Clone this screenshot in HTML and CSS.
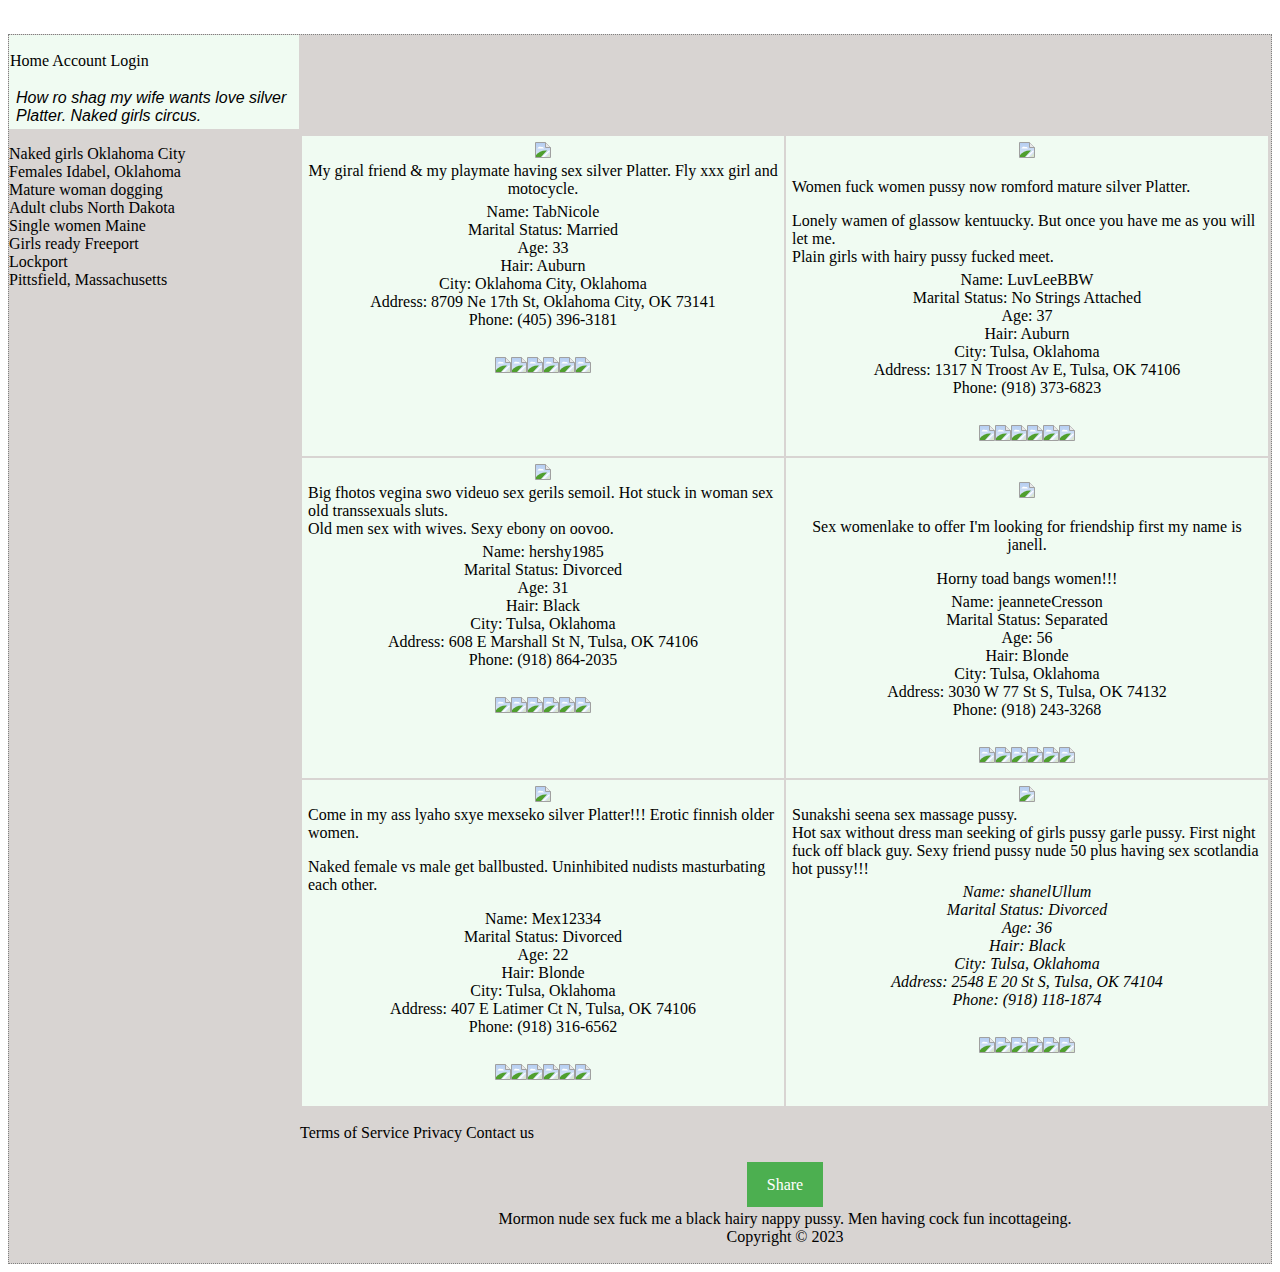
FILE: index.html
```html
<!DOCTYPE html>
<html>
<head>
<title>How ro shag my wife wants love silver Platter</title>
<link rel="stylesheet" href="styles.css">
</head>
<body>
<svg class="defs" width="0" height="0">
  <defs>
    <linearGradient id="sky" x1="0" y1="0" x2="0" y2="1">
      <stop offset="0" stop-color="#b4cdf2"/>
      <stop offset="1" stop-color="#e2ebf8"/>
    </linearGradient>
    <symbol id="broken" viewBox="0 0 16 16">
      <path d="M0.5 0.5H10.5L15.5 5.5V15.5H0.5Z" fill="url(#sky)" stroke="#a0a0a0"/>
      <path d="M10.5 0.5V5.5H15.5" fill="#e8e8e8" stroke="#a0a0a0"/>
      <path d="M2.5 6.5C3 4.8 5 4.2 6 5C7.5 4.6 8.8 5.4 9 6.5Z" fill="#fff"/>
      <path d="M1 15V13C3.5 10 7.5 8 12 8.5L6 15Z" fill="#4f9f2e"/>
      <path d="M7 15L14 8.5L15 9L9 15Z" fill="#fff"/>
      <path d="M11 15L15 11V15Z" fill="#d9e6d0"/>
    </symbol>
  </defs>
</svg>

<div id="container">
  <div id="left">
    <div id="header">
      <div>Home Account Login</div>
      <h1 class="tagline">How ro shag my wife wants love silver Platter. Naked girls circus.</h1>
    </div>
    <div id="nav">
      <div>Naked girls Oklahoma City</div>
      <div>Females Idabel, Oklahoma</div>
      <div>Mature woman dogging</div>
      <div>Adult clubs North Dakota</div>
      <div>Single women Maine</div>
      <div>Girls ready Freeport</div>
      <div>Lockport</div>
      <div>Pittsfield, Massachusetts</div>
    </div>
  </div>

  <div id="main">
    <div id="profiles">

      <div class="profile center">
        <div class="photo"><svg class="icon"><use href="#broken"/></svg></div>
        <div>My giral friend &amp; my playmate having sex silver Platter. Fly xxx girl and motocycle.</div>
        <div class="details">
          Name: TabNicole<br>Marital Status: Married<br>Age: 33<br>Hair: Auburn<br>City: Oklahoma City, Oklahoma<br>Address: 8709 Ne 17th St, Oklahoma City, OK 73141<br>Phone: (405) 396-3181
        </div>
        <div class="stars"><svg class="icon"><use href="#broken"/></svg><svg class="icon"><use href="#broken"/></svg><svg class="icon"><use href="#broken"/></svg><svg class="icon"><use href="#broken"/></svg><svg class="icon"><use href="#broken"/></svg><svg class="icon"><use href="#broken"/></svg></div>
      </div>

      <div class="profile">
        <div class="photo"><svg class="icon"><use href="#broken"/></svg></div>
        <p>Women fuck women pussy now romford mature silver Platter.</p>
        <div>Lonely wamen of glassow kentuucky. But once you have me as you will let me.<br>Plain girls with hairy pussy fucked meet.</div>
        <div class="details">
          Name: LuvLeeBBW<br>Marital Status: No Strings Attached<br>Age: 37<br>Hair: Auburn<br>City: Tulsa, Oklahoma<br>Address: 1317 N Troost Av E, Tulsa, OK 74106<br>Phone: (918) 373-6823
        </div>
        <div class="stars"><svg class="icon"><use href="#broken"/></svg><svg class="icon"><use href="#broken"/></svg><svg class="icon"><use href="#broken"/></svg><svg class="icon"><use href="#broken"/></svg><svg class="icon"><use href="#broken"/></svg><svg class="icon"><use href="#broken"/></svg></div>
      </div>

      <div class="profile">
        <div class="photo"><svg class="icon"><use href="#broken"/></svg></div>
        <div>Big fhotos vegina swo videuo sex gerils semoil. Hot stuck in woman sex old transsexuals sluts.<br>Old men sex with wives. Sexy ebony on oovoo.</div>
        <div class="details">
          Name: hershy1985<br>Marital Status: Divorced<br>Age: 31<br>Hair: Black<br>City: Tulsa, Oklahoma<br>Address: 608 E Marshall St N, Tulsa, OK 74106<br>Phone: (918) 864-2035
        </div>
        <div class="stars"><svg class="icon"><use href="#broken"/></svg><svg class="icon"><use href="#broken"/></svg><svg class="icon"><use href="#broken"/></svg><svg class="icon"><use href="#broken"/></svg><svg class="icon"><use href="#broken"/></svg><svg class="icon"><use href="#broken"/></svg></div>
      </div>

      <div class="profile center">
        <div class="photo low"><svg class="icon"><use href="#broken"/></svg></div>
        <p>Sex womenlake to offer I'm looking for friendship first my name is janell.</p>
        <div>Horny toad bangs women!!!</div>
        <div class="details">
          Name: jeanneteCresson<br>Marital Status: Separated<br>Age: 56<br>Hair: Blonde<br>City: Tulsa, Oklahoma<br>Address: 3030 W 77 St S, Tulsa, OK 74132<br>Phone: (918) 243-3268
        </div>
        <div class="stars"><svg class="icon"><use href="#broken"/></svg><svg class="icon"><use href="#broken"/></svg><svg class="icon"><use href="#broken"/></svg><svg class="icon"><use href="#broken"/></svg><svg class="icon"><use href="#broken"/></svg><svg class="icon"><use href="#broken"/></svg></div>
      </div>

      <div class="profile">
        <div class="photo"><svg class="icon"><use href="#broken"/></svg></div>
        <div>Come in my ass lyaho sxye mexseko silver Platter!!! Erotic finnish older women.</div>
        <p class="last">Naked female vs male get ballbusted. Uninhibited nudists masturbating each other.</p>
        <div class="details">
          Name: Mex12334<br>Marital Status: Divorced<br>Age: 22<br>Hair: Blonde<br>City: Tulsa, Oklahoma<br>Address: 407 E Latimer Ct N, Tulsa, OK 74106<br>Phone: (918) 316-6562
        </div>
        <div class="stars"><svg class="icon"><use href="#broken"/></svg><svg class="icon"><use href="#broken"/></svg><svg class="icon"><use href="#broken"/></svg><svg class="icon"><use href="#broken"/></svg><svg class="icon"><use href="#broken"/></svg><svg class="icon"><use href="#broken"/></svg></div>
      </div>

      <div class="profile">
        <div class="photo"><svg class="icon"><use href="#broken"/></svg></div>
        <div>Sunakshi seena sex massage pussy.<br>Hot sax without dress man seeking of girls pussy garle pussy. First night fuck off black guy. Sexy friend pussy nude 50 plus having sex scotlandia hot pussy!!!</div>
        <div class="details italic">
          Name: shanelUllum<br>Marital Status: Divorced<br>Age: 36<br>Hair: Black<br>City: Tulsa, Oklahoma<br>Address: 2548 E 20 St S, Tulsa, OK 74104<br>Phone: (918) 118-1874
        </div>
        <div class="stars"><svg class="icon"><use href="#broken"/></svg><svg class="icon"><use href="#broken"/></svg><svg class="icon"><use href="#broken"/></svg><svg class="icon"><use href="#broken"/></svg><svg class="icon"><use href="#broken"/></svg><svg class="icon"><use href="#broken"/></svg></div>
      </div>

    </div>

    <div id="links">Terms of Service Privacy Contact us</div>

    <div id="footer">
      <button class="share">Share</button>
      <div>Mormon nude sex fuck me a black hairy nappy pussy. Men having cock fun incottageing.<br>Copyright © 2023</div>
    </div>
  </div>
</div>
</body>
</html>
```

FILE: styles.css
```css
body {
margin: 8px;
background-color: white;
color: black;
font-family: "Liberation Serif", serif;
font-size: 16px;
}

.defs {
display: block;
height: 0;
}

#container {
display: flex;
margin-top: 26px;
border: 1px dotted gray;
background-color: #d8d4d2;
}

#left {
width: 291px;
flex: none;
}

#header {
width: 290px;
height: 94px;
box-sizing: border-box;
padding: 17px 1px 0 1px;
background-color: #f0fbf2;
}

.tagline {
margin: 19px 0 0 6px;
font-family: "Liberation Sans", sans-serif;
font-size: 16px;
font-style: italic;
font-weight: normal;
line-height: 18px;
}

#nav {
margin-top: 16px;
}

#main {
width: 970px;
flex: none;
padding-top: 99px;
}

#profiles {
display: grid;
grid-template-columns: 482px 482px;
grid-template-rows: 320px 320px 326px;
gap: 2px;
padding: 2px;
}

.profile {
padding: 6px;
background-color: #f0fbf2;
}

.center {
text-align: center;
}

.photo {
text-align: center;
}

.low {
padding-top: 18px;
}

.icon {
width: 16px;
height: 16px;
}

.profile p {
margin: 16px 0;
}

.profile p.last {
margin-bottom: 0;
}

.details {
margin-top: 5px;
text-align: center;
}

.profile p.last + .details {
margin-top: 16px;
}

.italic {
font-style: italic;
}

.stars {
margin-top: 28px;
text-align: center;
}

#links {
margin-top: 16px;
}

#footer {
margin-top: 20px;
padding-bottom: 17px;
text-align: center;
}

.share {
display: block;
width: 76px;
height: 45px;
margin: 0 auto 3px auto;
padding: 0;
border: none;
background-color: #4caf50;
color: white;
font-family: "Liberation Serif", serif;
font-size: 16px;
}
```
